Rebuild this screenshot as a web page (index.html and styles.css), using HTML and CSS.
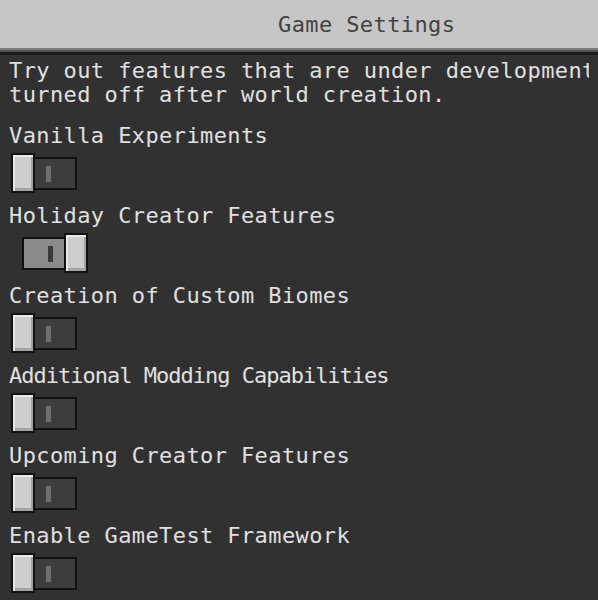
FILE: index.html
```html
<!DOCTYPE html>
<html lang="en">

<head>
  <meta charset="UTF-8">
  <meta name="viewport" content="width=device-width, initial-scale=1.0">
  <title>Game Settings</title>
  <link rel="stylesheet" href="styles.css">
</head>

<body>
  <div class="header">Game Settings</div>
  <div class="content">
    <div class="desc">
      <div class="line">Try out features that are under development</div>
      <div class="line">turned off after world creation.</div>
    </div>

    <div class="option">
      <div class="label">Vanilla Experiments</div>
      <div class="toggle"><span class="knob"></span><span class="track"><i class="mark"></i></span></div>
    </div>
    <div class="option">
      <div class="label">Holiday Creator Features</div>
      <div class="toggle on"><span class="knob"></span><span class="track"><i class="mark"></i></span></div>
    </div>
    <div class="option">
      <div class="label">Creation of Custom Biomes</div>
      <div class="toggle"><span class="knob"></span><span class="track"><i class="mark"></i></span></div>
    </div>
    <div class="option">
      <div class="label narrow">Additional Modding Capabilities</div>
      <div class="toggle"><span class="knob"></span><span class="track"><i class="mark"></i></span></div>
    </div>
    <div class="option">
      <div class="label">Upcoming Creator Features</div>
      <div class="toggle"><span class="knob"></span><span class="track"><i class="mark"></i></span></div>
    </div>
    <div class="option">
      <div class="label">Enable GameTest Framework</div>
      <div class="toggle"><span class="knob"></span><span class="track"><i class="mark"></i></span></div>
    </div>
  </div>
</body>

</html>
```

FILE: styles.css
```css
* {
  box-sizing: border-box;
}

body {
  margin: 0;
  background-color: #313131;
  font-family: "DejaVu Sans Mono", "Liberation Mono", monospace;
  font-size: 22px;
  letter-spacing: 0.4px;
  color: #e0e0e0;
  overflow: hidden;
}

.header {
  height: 50px;
  line-height: 50px;
  padding-left: 278px;
  background-color: #c6c6c6;
  color: #424242;
  border-bottom: 2px solid #7b7b7b;
  box-shadow: 0 2px 0 #545454, 0 5px 0 #1c1c1c;
  white-space: nowrap;
}

.content {
  padding: 9px 9px 0;
}

.desc {
  line-height: 24px;
  margin-bottom: 16px;
}

.desc .line {
  white-space: nowrap;
  overflow: hidden;
}

.option {
  margin-bottom: 10px;
}

.option .label {
  line-height: 26px;
  white-space: nowrap;
}

.option .label.narrow {
  letter-spacing: -1px;
}

/* toggle: knob + track, knob sits on the left when off */
.toggle {
  display: flex;
  align-items: flex-start;
  height: 40px;
  margin-top: 4px;
  margin-left: 2px;
}

.toggle .knob {
  position: relative;
  z-index: 1;
  width: 24px;
  height: 40px;
  border: 2px solid #111;
  background-color: #cdcdcd;
  box-shadow: inset 2px 2px 0 #e9e9e9, inset -2px -3px 0 #a2a2a2;
}

.toggle .track {
  display: flex;
  align-items: center;
  width: 44px;
  height: 33px;
  margin-top: 4px;
  margin-left: -2px;
  padding-left: 11px;
  border: 2px solid #111;
  background-color: #3d3d3d;
}

.toggle .mark {
  width: 5px;
  height: 16px;
  background-color: #6f6f6f;
}

.toggle.on {
  margin-left: 13px;
}

.toggle.on .track {
  order: -1;
  justify-content: flex-end;
  margin-left: 0;
  margin-right: -2px;
  padding-left: 0;
  padding-right: 11px;
  background-color: #8a8a8a;
}

.toggle.on .mark {
  background-color: #3a3a3a;
}
```
